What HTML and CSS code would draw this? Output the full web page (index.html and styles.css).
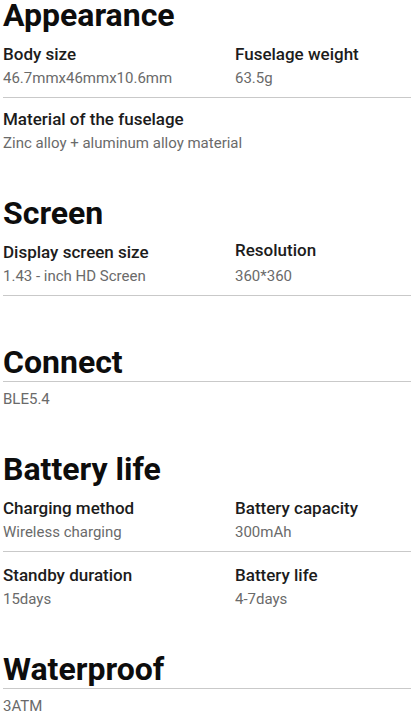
FILE: index.html
```html
<!DOCTYPE html>
<html lang="en">
<head>
<meta charset="utf-8">
<title>Specifications</title>
<link rel="stylesheet" href="styles.css">
</head>
<body>
<main class="specs">
  <section class="section">
    <h2 class="section__title">Appearance</h2>
    <div class="row row--ruled">
      <div class="item">
        <div class="item__label">Body size</div>
        <div class="item__value">46.7mmx46mmx10.6mm</div>
      </div>
      <div class="item">
        <div class="item__label">Fuselage weight</div>
        <div class="item__value">63.5g</div>
      </div>
    </div>
    <div class="row">
      <div class="item item--wide">
        <div class="item__label">Material of the fuselage</div>
        <div class="item__value">Zinc alloy + aluminum alloy material</div>
      </div>
    </div>
  </section>

  <section class="section section--ruled-end">
    <h2 class="section__title">Screen</h2>
    <div class="row row--ruled">
      <div class="item">
        <div class="item__label">Display screen size</div>
        <div class="item__value">1.43 - inch HD Screen</div>
      </div>
      <div class="item">
        <div class="item__label item__label--up">Resolution</div>
        <div class="item__value">360*360</div>
      </div>
    </div>
  </section>

  <section class="section">
    <h2 class="section__title section__title--ruled">Connect</h2>
    <div class="plain-value">BLE5.4</div>
  </section>

  <section class="section">
    <h2 class="section__title">Battery life</h2>
    <div class="row row--ruled">
      <div class="item">
        <div class="item__label">Charging method</div>
        <div class="item__value">Wireless charging</div>
      </div>
      <div class="item">
        <div class="item__label">Battery capacity</div>
        <div class="item__value">300mAh</div>
      </div>
    </div>
    <div class="row row--after-rule">
      <div class="item">
        <div class="item__label">Standby duration</div>
        <div class="item__value">15days</div>
      </div>
      <div class="item">
        <div class="item__label">Battery life</div>
        <div class="item__value">4-7days</div>
      </div>
    </div>
  </section>

  <section class="section section--last">
    <h2 class="section__title section__title--ruled">Waterproof</h2>
    <div class="plain-value">3ATM</div>
  </section>
</main>
</body>
</html>
```
FILE: styles.css
```css
* {
  box-sizing: border-box;
}

html, body {
  margin: 0;
  padding: 0;
  background: #ffffff;
}

body {
  font-family: Roboto, "Noto Sans", "Liberation Sans", sans-serif;
  color: #1a1a1a;
  overflow: hidden;
}

.specs {
  padding: 0 3px;
}

.section {
  padding-bottom: 42px;
}

.section--ruled-end {
  padding-bottom: 51px;
}

.section--last {
  padding-bottom: 0;
}

.section__title {
  margin: 0;
  font-size: 32px;
  line-height: 30px;
  font-weight: 700;
  color: #0d0d0d;
}

.section__title--ruled {
  padding-bottom: 4px;
  border-bottom: 1px solid #c9c9c9;
}

.row {
  display: grid;
  grid-template-columns: 232px 1fr;
  padding-top: 12px;
}

.row--ruled {
  padding-bottom: 6px;
  border-bottom: 1px solid #c9c9c9;
}

.row--ruled + .row {
  padding-top: 9px;
}

.row--ruled + .row--after-rule {
  padding-top: 11px;
}

.item--wide {
  grid-column: 1 / -1;
}

.item__label {
  font-size: 17px;
  line-height: 24px;
  font-weight: 500;
  color: #1c1c1c;
}

.item__label--up {
  position: relative;
  top: -2px;
}

.item__value {
  font-size: 15px;
  line-height: 25px;
  color: #6a6a6a;
}

.plain-value {
  padding-top: 5px;
  font-size: 15px;
  line-height: 25px;
  color: #6a6a6a;
}
```
